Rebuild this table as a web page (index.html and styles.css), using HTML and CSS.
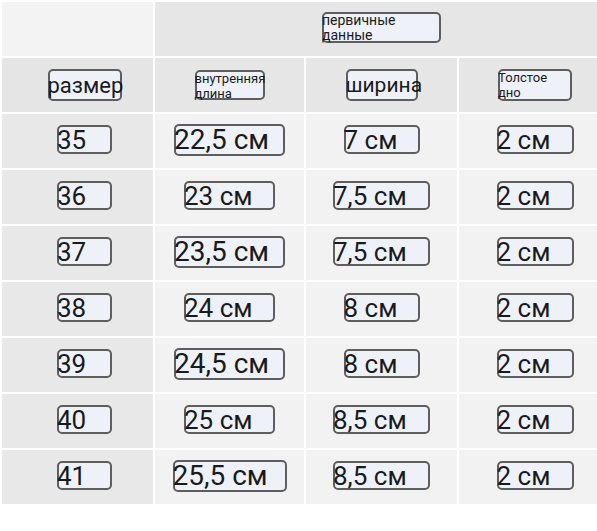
FILE: index.html
```html
<!DOCTYPE html>
<html lang="ru">
<head>
<meta charset="utf-8">
<title>Таблица размеров</title>
<link rel="stylesheet" href="styles.css">
</head>
<body>
<div class="chart">
  <div class="cell corner"></div>
  <div class="cell group"><div class="box box-group"><span class="txt small big">первичные<br>данные</span></div></div>

  <div class="cell head col1"><div class="box hbox w74"><span class="txt hdr">размер</span></div></div>
  <div class="cell head"><div class="box sbox w70"><span class="txt small">внутренняя<br>длина</span></div></div>
  <div class="cell head"><div class="box hbox w72"><span class="txt hdr narrow">ширина</span></div></div>
  <div class="cell head col4"><div class="box sbox w74 tall"><span class="txt small">Толстое<br>дно</span></div></div>

  <div class="cell col1"><div class="box w55"><span class="txt">35</span></div></div>
  <div class="cell data"><div class="box long w111"><span class="txt wide">22,5 см</span></div></div>
  <div class="cell data"><div class="box w76"><span class="txt">7 см</span></div></div>
  <div class="cell data col4"><div class="box w77"><span class="txt">2 см</span></div></div>

  <div class="cell col1"><div class="box w55"><span class="txt">36</span></div></div>
  <div class="cell data"><div class="box w91"><span class="txt">23 см</span></div></div>
  <div class="cell data"><div class="box w97"><span class="txt">7,5 см</span></div></div>
  <div class="cell data col4"><div class="box w77"><span class="txt">2 см</span></div></div>

  <div class="cell col1"><div class="box w55"><span class="txt">37</span></div></div>
  <div class="cell data"><div class="box long w111"><span class="txt wide">23,5 см</span></div></div>
  <div class="cell data"><div class="box w97"><span class="txt">7,5 см</span></div></div>
  <div class="cell data col4"><div class="box w77"><span class="txt">2 см</span></div></div>

  <div class="cell col1"><div class="box w55"><span class="txt">38</span></div></div>
  <div class="cell data"><div class="box w91"><span class="txt">24 см</span></div></div>
  <div class="cell data"><div class="box w76"><span class="txt">8 см</span></div></div>
  <div class="cell data col4"><div class="box w77"><span class="txt">2 см</span></div></div>

  <div class="cell col1"><div class="box w55"><span class="txt">39</span></div></div>
  <div class="cell data"><div class="box long w111"><span class="txt wide">24,5 см</span></div></div>
  <div class="cell data"><div class="box w76"><span class="txt">8 см</span></div></div>
  <div class="cell data col4"><div class="box w77"><span class="txt">2 см</span></div></div>

  <div class="cell col1"><div class="box w55"><span class="txt">40</span></div></div>
  <div class="cell data"><div class="box w91"><span class="txt">25 см</span></div></div>
  <div class="cell data"><div class="box w97"><span class="txt">8,5 см</span></div></div>
  <div class="cell data col4"><div class="box w77"><span class="txt">2 см</span></div></div>

  <div class="cell col1"><div class="box w55"><span class="txt">41</span></div></div>
  <div class="cell data"><div class="box long w114"><span class="txt wide">25,5 см</span></div></div>
  <div class="cell data"><div class="box w97"><span class="txt">8,5 см</span></div></div>
  <div class="cell data col4"><div class="box w77"><span class="txt">2 см</span></div></div>
</div>
</body>
</html>
```

FILE: styles.css
```css
html, body {
  margin: 0;
  background: #ffffff;
}

body {
  font-family: Roboto, "Noto Sans", "Liberation Sans", sans-serif;
  color: #1a1a1a;
}

.chart {
  display: grid;
  grid-template-columns: 151px 149px 151px 138px;
  grid-auto-rows: 54px;
  gap: 2px;
  padding: 2px 0 0 2px;
}

.cell {
  display: flex;
  align-items: center;
  justify-content: center;
  padding-bottom: 3px;
  box-sizing: border-box;
}

.corner {
  background: #f3f3f3;
}

.group {
  grid-column: span 3;
  background: #e6e6e6;
  justify-content: flex-start;
  padding-left: 167px;
}

.head {
  background: #e6e6e6;
  padding-bottom: 0;
}

.col1 {
  background: #e8e8e8;
  padding-left: 14px;
}

.head.col1 {
  background: #e5e5e5;
}

.data {
  background: #f2f2f2;
}

.col4 {
  padding-left: 14px;
}

.box {
  box-sizing: border-box;
  height: 29px;
  border: 2px solid #5e5e5e;
  border-radius: 5px;
  background: #eef2f8;
  display: flex;
  align-items: center;
  overflow: visible;
  flex: none;
}

.txt {
  display: inline-block;
  white-space: nowrap;
  font-size: 26px;
  line-height: 29px;
  margin-left: -2px;
  margin-top: 2px;
}

.txt.wide {
  font-size: 28px;
  margin-top: -1px;
}

.long {
  height: 32px;
}

.hbox {
  height: 32px;
}

.txt.hdr {
  font-size: 22px;
  margin-top: 1px;
}

.txt.hdr.narrow {
  font-size: 21px;
}

.sbox,
.box-group {
  align-items: flex-start;
  height: 31px;
}

.sbox.w70 {
  height: 30px;
}

.tall {
  height: 32px;
}

.txt.small {
  font-size: 13px;
  line-height: 15px;
  white-space: normal;
  margin-top: -1px;
}

.txt.small.big {
  font-size: 14px;
}

.box-group {
  width: 119px;
}

.w55 { width: 55px; }
.w70 { width: 70px; }
.w72 { width: 72px; }
.w74 { width: 74px; }
.w76 { width: 76px; }
.w77 { width: 77px; }
.w91 { width: 91px; }
.w97 { width: 97px; }
.w111 { width: 111px; }
.w114 { width: 114px; }
```
